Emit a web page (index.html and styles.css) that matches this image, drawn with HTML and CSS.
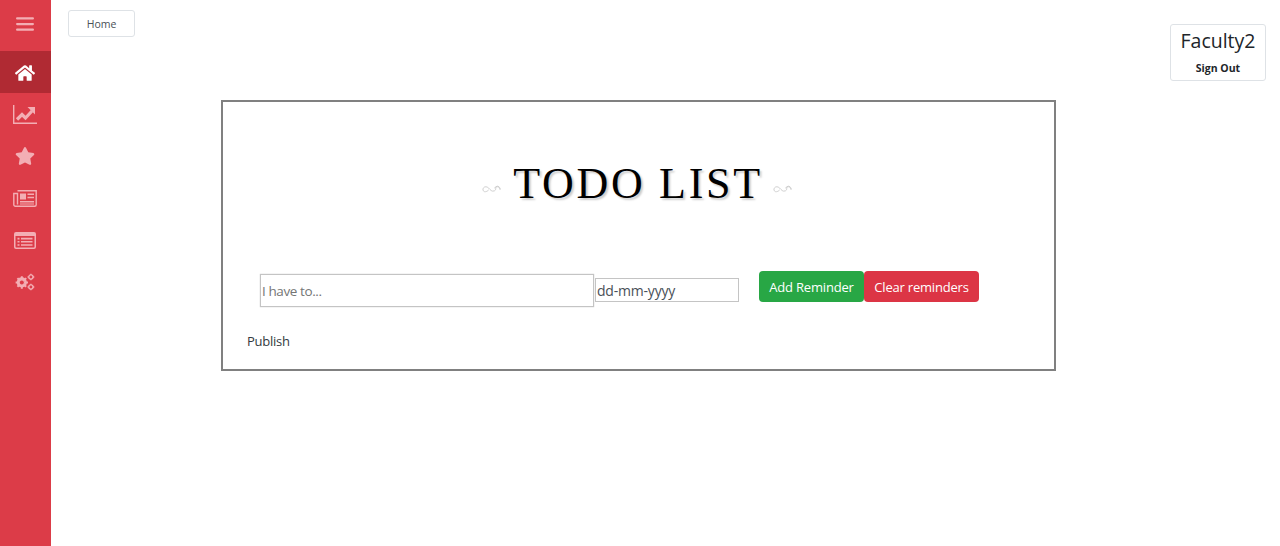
FILE: index.html
```html
<!DOCTYPE html>
<html lang="en">
<head>
    <meta charset="UTF-8">
    <meta name="viewport" content="width=device-width, initial-scale=1.0">
    <title>Todo List</title>
    <link rel="stylesheet" href="styles.css">
</head>
<body>

    <!-- Sidebar -->
    <nav class="sidebar">
        <a class="side-toggle" href="#">
            <svg class="icon-bars" viewBox="0 0 16 12"><path d="M1 1h14M1 6h14M1 11h14" stroke="currentColor" stroke-width="2" stroke-linecap="round" fill="none"/></svg>
        </a>
        <a class="side-link active" href="#">
            <svg class="icon-home" viewBox="0 0 576 512"><path fill="currentColor" d="M280.37 148.26L96 300.11V464a16 16 0 0 0 16 16l112.06-.29a16 16 0 0 0 15.92-16V368a16 16 0 0 1 16-16h64a16 16 0 0 1 16 16v95.64a16 16 0 0 0 16 16.05L464 480a16 16 0 0 0 16-16V300L295.67 148.26a12.19 12.19 0 0 0-15.3 0zM571.6 251.47L488 182.56V44.05a12 12 0 0 0-12-12h-56a12 12 0 0 0-12 12v72.61L318.47 43a48 48 0 0 0-61 0L4.34 251.47a12 12 0 0 0-1.6 16.9l25.5 31A12 12 0 0 0 45.15 301l235.22-193.74a12.19 12.19 0 0 1 15.3 0L530.9 301a12 12 0 0 0 16.9-1.6l25.5-31a12 12 0 0 0-1.7-16.93z"/></svg>
        </a>
        <a class="side-link" href="#">
            <svg class="icon-chart" viewBox="0 0 24 19"><path d="M.7 0v18.300H24" stroke="currentColor" stroke-width="1.400" fill="none"/><path d="M4 14.500l5-5 3.500 3.500L19 6" stroke="currentColor" stroke-width="3.200" fill="none"/><path fill="currentColor" d="M14.500 2h7.500v7.500z"/></svg>
        </a>
        <a class="side-link" href="#">
            <svg class="icon-star" viewBox="0 0 576 512"><path fill="currentColor" d="M259.3 17.8L194 150.2 47.9 171.5c-26.2 3.8-36.7 36.1-17.7 54.6l105.7 103-25 145.5c-4.5 26.3 23.2 46 46.4 33.7L288 439.6l130.7 68.7c23.2 12.2 50.9-7.4 46.4-33.7l-25-145.5 105.7-103c19-18.5 8.5-50.8-17.7-54.6L382 150.2 316.7 17.8c-11.7-23.6-45.6-23.9-57.4 0z"/></svg>
        </a>
        <a class="side-link" href="#">
            <svg class="icon-news" viewBox="0 0 24 17"><path d="M4.500 .8h18.700v14a1.500 1.500 0 0 1-1.500 1.500H2.300A1.500 1.500 0 0 1 .8 14.800V3.500h3.700v11" stroke="currentColor" stroke-width="1.400" fill="none"/><path fill="currentColor" d="M7 3.500h6v6H7zM14.500 3.500H21v1.600h-6.500zM14.500 6.700H21v1.600h-6.500zM7 11h14v1.400H7zM7 13.400h14v1.200H7z"/></svg>
        </a>
        <a class="side-link" href="#">
            <svg class="icon-list" viewBox="0 0 22 17"><path fill="currentColor" fill-rule="evenodd" d="M2 0h18a2 2 0 0 1 2 2v13a2 2 0 0 1-2 2H2a2 2 0 0 1-2-2V2a2 2 0 0 1 2-2zM1.500 4v11l.5.500h18l.5-.5V4zM3.500 5.800h2v1.600h-2zM7 5.800h11.500v1.600H7zM3.500 9h2v1.600h-2zM7 9h11.500v1.600H7zM3.500 12.200h2v1.600h-2zM7 12.200h11.500v1.600H7z"/></svg>
        </a>
        <a class="side-link" href="#">
            <svg class="icon-cogs" viewBox="0 0 22 19">
                <circle cx="7.500" cy="10" r="4.300" stroke="currentColor" stroke-width="2.600" fill="none"/>
                <path d="M7.500 3.200v13.600M.7 10h13.600M2.700 5.200l9.600 9.600M12.300 5.200l-9.600 9.600" stroke="currentColor" stroke-width="2.200"/>
                <circle cx="7.500" cy="10" r="2.200" fill="#dc3c48"/>
                <circle cx="17.500" cy="4" r="2.300" stroke="currentColor" stroke-width="1.500" fill="none"/>
                <path d="M17.500 .3v1.400M17.500 6.300v1.400M13.800 4h1.400M19.800 4h1.400" stroke="currentColor" stroke-width="1.400"/>
                <circle cx="17.500" cy="15" r="2.300" stroke="currentColor" stroke-width="1.500" fill="none"/>
                <path d="M17.500 11.300v1.400M17.500 17.300v1.400M13.800 15h1.400M19.800 15h1.400" stroke="currentColor" stroke-width="1.400"/>
            </svg>
        </a>
    </nav>

    <div class="main">
        <div class="topbar">
            <a class="home-btn" href="#">Home</a>
            <div class="user-card">
                <div class="user-name">Faculty2</div>
                <a class="sign-out" href="#">Sign Out</a>
            </div>
        </div>

        <!-- Todo panel -->
        <section class="todo-panel">
            <h1 class="todo-title">
                <svg class="swirl" viewBox="0 0 20 8"><path d="M1 5c0-4 4-4 6-2s3 4 6 3 0-5 3-5 3 3 3 4M1 5c1 3 4 2 6 0M13 3c2-2 5-2 6 1" stroke="#ccc" stroke-width="1" fill="none"/></svg>
                <span class="title-text">TODO LIST</span>
                <svg class="swirl" viewBox="0 0 20 8"><path d="M1 5c0-4 4-4 6-2s3 4 6 3 0-5 3-5 3 3 3 4M1 5c1 3 4 2 6 0M13 3c2-2 5-2 6 1" stroke="#ccc" stroke-width="1" fill="none"/></svg>
            </h1>
            <form class="todo-form">
                <input class="todo-input" type="text" placeholder="I have to...">
                <input class="date-input" type="text" value="dd-mm-yyyy">
                <div class="todo-buttons">
                    <button type="button" class="btn btn-green">Add Reminder</button>
                    <button type="button" class="btn btn-red">Clear reminders</button>
                </div>
            </form>
            <div class="publish">Publish</div>
        </section>
    </div>

</body>
</html>
```

FILE: styles.css
```css
body {
    margin: 0;
    height: 546px;
    display: flex;
    overflow: hidden;
    background-color: white;
    font-family: 'Open Sans', 'Noto Sans', sans-serif;
    color: #343a40;
}

/* Sidebar */
.sidebar {
    width: 51px;
    flex-shrink: 0;
    background-color: #dc3c48;
    display: flex;
    flex-direction: column;
}

.side-toggle,
.side-link {
    display: flex;
    justify-content: center;
    align-items: center;
    padding-right: 1px;
    color: #f3aeb4;
}

.side-toggle {
    height: 51px;
    padding-bottom: 3px;
    box-sizing: border-box;
}

.side-link {
    height: 42px;
}

.side-link.active {
    background-color: #b02a33;
    color: white;
}

.icon-bars {
    width: 18px;
    height: 14px;
}

.icon-home,
.icon-star {
    width: 20px;
    height: 18px;
}

.icon-home {
    margin-top: 2px;
}

.icon-chart {
    width: 24px;
    height: 19px;
}

.icon-news {
    width: 24px;
    height: 17px;
}

.icon-list {
    width: 22px;
    height: 17px;
}

.icon-cogs {
    width: 20px;
    height: 18px;
}

/* Top row */
.main {
    flex: 1;
}

.topbar {
    height: 100px;
    box-sizing: border-box;
    padding: 10px 14px 0 17px;
    display: flex;
    justify-content: space-between;
    align-items: flex-start;
}

.home-btn {
    width: 67px;
    height: 27px;
    box-sizing: border-box;
    border: 1px solid #dee2e6;
    border-radius: 3px;
    display: flex;
    justify-content: center;
    align-items: center;
    font-size: 10.500px;
    color: #495057;
    text-decoration: none;
}

.user-card {
    width: 96px;
    height: 57px;
    margin-top: 14px;
    box-sizing: border-box;
    border: 1px solid #dee2e6;
    border-radius: 3px;
    text-align: center;
}

.user-name {
    font-size: 19.500px;
    font-weight: 500;
    line-height: 28px;
    margin-top: 2px;
    color: #212529;
}

.sign-out {
    display: block;
    font-size: 10.500px;
    line-height: 16px;
    margin-top: 5px;
    font-weight: bold;
    color: #212529;
    text-decoration: none;
}

/* Todo panel */
.todo-panel {
    width: 835px;
    height: 271px;
    margin-left: 170px;
    box-sizing: border-box;
    border: 2px solid #808080;
}

.todo-title {
    margin: 0;
    padding-top: 50px;
    padding-bottom: 3px;
    padding-right: 3px;
    height: 117px;
    box-sizing: border-box;
    display: flex;
    justify-content: center;
    align-items: center;
    gap: 12px;
    font-family: 'Liberation Serif', serif;
    font-weight: normal;
    font-size: 44px;
    line-height: 64px;
    letter-spacing: 2.700px;
    color: black;
    text-shadow: 2px 2px 2px #ccc;
}

.title-text {
    margin-right: -2px;
}

.swirl {
    width: 19px;
    height: 8px;
    margin-top: 9px;
}

.todo-form {
    display: flex;
    align-items: center;
    padding-left: 37px;
    margin-top: 52px;
}

.todo-input {
    width: 334px;
    height: 33px;
    box-sizing: border-box;
    border: 1px solid #c4c4c4;
    box-shadow: 0 0 1px #bbb;
    padding: 2px 1px 0;
    font-family: inherit;
    font-size: 13.500px;
    letter-spacing: -0.400px;
    color: #495057;
}

.todo-input::placeholder {
    color: #757575;
}

.date-input {
    width: 144px;
    height: 24px;
    margin-left: 1px;
    box-sizing: border-box;
    border: 1px solid #c4c4c4;
    padding: 0 1px;
    font-family: inherit;
    font-size: 14px;
    letter-spacing: -0.200px;
    color: #495057;
}

.todo-buttons {
    display: flex;
    margin-left: 20px;
    margin-bottom: 7px;
}

.btn {
    height: 31px;
    border: none;
    border-radius: 4px;
    color: white;
    font-family: inherit;
    font-size: 13px;
    letter-spacing: -0.200px;
    padding: 0;
}

.btn-green {
    width: 105px;
    background-color: #28a745;
}

.btn-red {
    width: 115px;
    background-color: #dc3545;
}

.publish {
    margin-top: 22px;
    padding-left: 24px;
    font-size: 13px;
    letter-spacing: -0.250px;
    line-height: 20px;
}
```
